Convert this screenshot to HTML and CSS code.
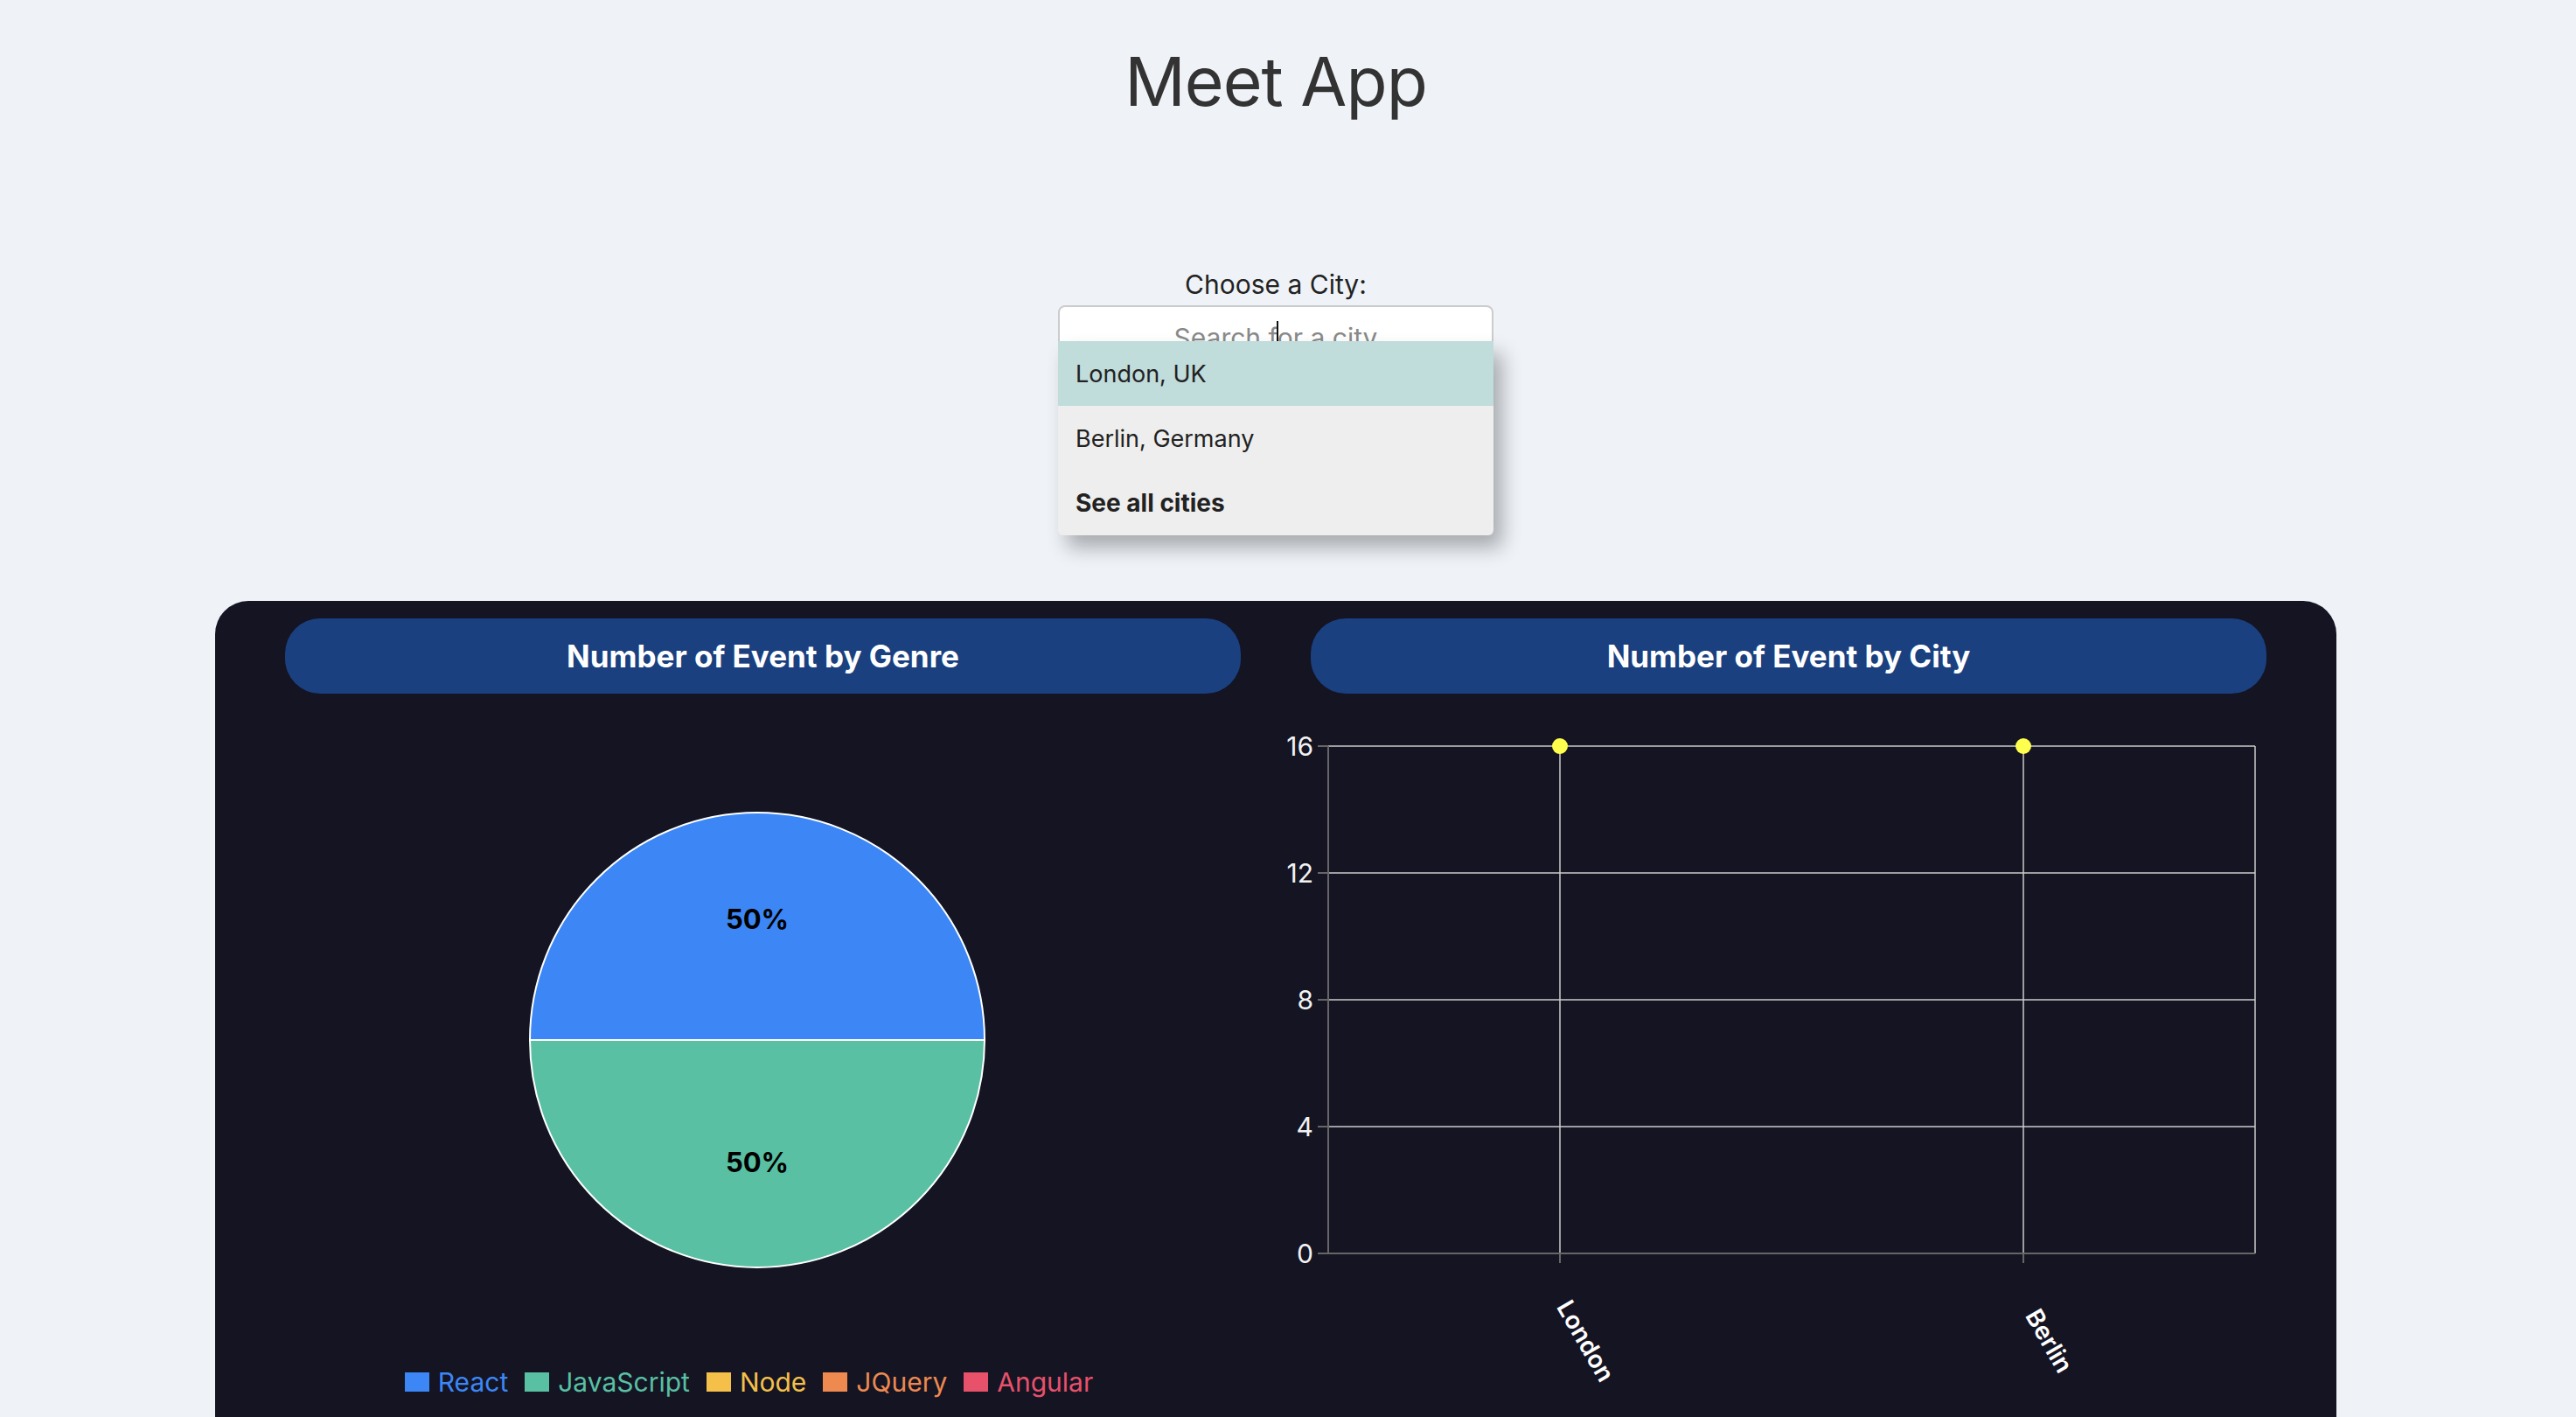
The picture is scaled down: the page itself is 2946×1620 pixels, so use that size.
FILE: index.html
```html
<!DOCTYPE html>
<html lang="en">
<head>
<meta charset="utf-8">
<title>Meet App</title>
<link rel="stylesheet" href="styles.css">
</head>
<body>
<div class="app">
  <h1 class="app-title">Meet App</h1>

  <div class="city-search">
    <label class="city-label" for="city">Choose a City:</label>
    <div class="city-field">
      <input id="city" class="city-input" type="text" placeholder="Search for a city">
      <span class="caret"></span>
      <ul class="suggestions">
        <li class="suggestion active">London, UK</li>
        <li class="suggestion">Berlin, Germany</li>
        <li class="suggestion all">See all cities</li>
      </ul>
    </div>
  </div>

  <section class="charts">
    <div class="chart">
      <h2 class="chart-title">Number of Event by Genre</h2>
      <svg class="chart-svg pie-svg" width="1173" height="769" viewBox="0 0 1173 769">
        <path class="slice react" d="M 320 396 A 260 260 0 0 1 840 396 Z"/>
        <path class="slice js" d="M 840 396 A 260 260 0 0 1 320 396 Z"/>
        <text class="pie-label" x="580" y="269">50%</text>
        <text class="pie-label" x="580" y="547">50%</text>
      </svg>
      <ul class="legend">
        <li class="legend-item c-react"><span class="swatch"></span>React</li>
        <li class="legend-item c-js"><span class="swatch"></span>JavaScript</li>
        <li class="legend-item c-node"><span class="swatch"></span>Node</li>
        <li class="legend-item c-jquery"><span class="swatch"></span>JQuery</li>
        <li class="legend-item c-angular"><span class="swatch"></span>Angular</li>
      </ul>
    </div>

    <div class="chart">
      <h2 class="chart-title">Number of Event by City</h2>
      <svg class="chart-svg line-svg" width="1173" height="820" viewBox="0 0 1173 820">
        <g class="grid">
          <line x1="60" y1="60" x2="1120" y2="60"/>
          <line x1="60" y1="205" x2="1120" y2="205"/>
          <line x1="60" y1="350" x2="1120" y2="350"/>
          <line x1="60" y1="495" x2="1120" y2="495"/>
          <line x1="325" y1="60" x2="325" y2="640"/>
          <line x1="855" y1="60" x2="855" y2="640"/>
          <line x1="1120" y1="60" x2="1120" y2="640"/>
        </g>
        <g class="axis">
          <line x1="60" y1="60" x2="60" y2="640"/>
          <line x1="60" y1="640" x2="1120" y2="640"/>
          <line x1="48" y1="60" x2="60" y2="60"/>
          <line x1="48" y1="205" x2="60" y2="205"/>
          <line x1="48" y1="350" x2="60" y2="350"/>
          <line x1="48" y1="495" x2="60" y2="495"/>
          <line x1="48" y1="640" x2="60" y2="640"/>
          <line x1="325" y1="640" x2="325" y2="651"/>
          <line x1="855" y1="640" x2="855" y2="651"/>
        </g>
        <g class="y-labels">
          <text x="43" y="71">16</text>
          <text x="43" y="216">12</text>
          <text x="43" y="361">8</text>
          <text x="43" y="506">4</text>
          <text x="43" y="651">0</text>
        </g>
        <g class="x-labels">
          <text transform="translate(346 745) rotate(60)">London</text>
          <text transform="translate(876 745) rotate(60)">Berlin</text>
        </g>
        <circle class="dot" cx="325" cy="60" r="9"/>
        <circle class="dot" cx="855" cy="60" r="9"/>
      </svg>
    </div>
  </section>
</div>
</body>
</html>
```

FILE: styles.css
```css
html, body {
  margin: 0;
  padding: 0;
}

body {
  background: #eff3f8;
  font-family: Inter, "Noto Sans", "Liberation Sans", sans-serif;
  overflow: hidden;
}

.app {
  width: 2918px;
  display: flex;
  flex-direction: column;
  align-items: center;
}

.app-title {
  margin: 46px 0 0;
  font-size: 77px;
  line-height: 94px;
  font-weight: 400;
  letter-spacing: -1px;
  color: #333333;
}

.city-search {
  margin-top: 167px;
  display: flex;
  flex-direction: column;
  align-items: center;
}

.city-label {
  display: block;
  font-size: 30px;
  line-height: 36px;
  color: #222222;
  margin-bottom: 6px;
}

.city-field {
  position: relative;
  width: 498px;
}

.city-input {
  display: block;
  box-sizing: border-box;
  width: 498px;
  height: 74px;
  padding: 0;
  border: 2px solid #cccccc;
  border-radius: 8px;
  background: #ffffff;
  font-family: Inter, "Noto Sans", sans-serif;
  font-size: 30px;
  text-align: center;
  color: #222222;
  outline: none;
}

.city-input::placeholder {
  color: #8a8a8a;
}

.caret {
  position: absolute;
  left: 250px;
  top: 18px;
  width: 2px;
  height: 24px;
  background: #111111;
}

.suggestions {
  position: absolute;
  top: 41px;
  left: 0;
  right: 0;
  margin: 0;
  padding: 0;
  list-style: none;
  background: #eeeeee;
  border-radius: 0 0 6px 6px;
  box-shadow: 10px 14px 22px rgba(0, 0, 0, 0.3);
  overflow: hidden;
}

.suggestion {
  height: 74px;
  padding: 0 20px;
  display: flex;
  align-items: center;
  font-size: 27px;
  color: #222222;
}

.suggestion.active {
  background: #c0dcdb;
}

.suggestion.all {
  font-size: 28px;
  font-weight: 700;
}

.charts {
  margin-top: 264px;
  width: 2426px;
  box-sizing: border-box;
  padding: 20px 40px 60px;
  background: #141423;
  border-radius: 38px;
  display: grid;
  grid-template-columns: 1fr 1fr;
}

.chart {
  display: flex;
  flex-direction: column;
}

.chart-title {
  margin: 0 40px;
  height: 86px;
  border-radius: 40px;
  background: #1a4080;
  color: #ffffff;
  font-size: 35px;
  font-weight: 700;
  display: flex;
  align-items: center;
  justify-content: center;
}

.chart-svg {
  display: block;
}

.slice {
  stroke: #ffffff;
  stroke-width: 2;
}

.slice.react { fill: #3c87f5; }
.slice.js { fill: #59c0a3; }

.pie-label {
  font-family: Inter, "Noto Sans", sans-serif;
  font-size: 31px;
  font-weight: 700;
  fill: #000000;
  text-anchor: middle;
}

.legend {
  margin: 0;
  padding: 0 32px 0 0;
  list-style: none;
  display: flex;
  justify-content: center;
  gap: 19px;
  font-size: 30px;
  line-height: 36px;
}

.legend-item {
  display: flex;
  align-items: center;
  gap: 10px;
}

.swatch {
  width: 28px;
  height: 22px;
  background: currentColor;
}

.c-react { color: #3c87f5; }
.c-js { color: #59c0a3; }
.c-node { color: #f5c04a; }
.c-jquery { color: #ee8a50; }
.c-angular { color: #e8516a; }

.grid line {
  stroke: #cccccc;
  stroke-width: 1.5;
}

.axis line {
  stroke: #666666;
  stroke-width: 2;
}

.y-labels text {
  font-family: Inter, "Noto Sans", sans-serif;
  font-size: 30px;
  fill: #f2f2f2;
  text-anchor: end;
}

.x-labels text {
  font-family: Inter, "Noto Sans", sans-serif;
  font-size: 28px;
  font-weight: 600;
  fill: #ffffff;
  text-anchor: middle;
}

.dot {
  fill: #ffff4d;
}
```
